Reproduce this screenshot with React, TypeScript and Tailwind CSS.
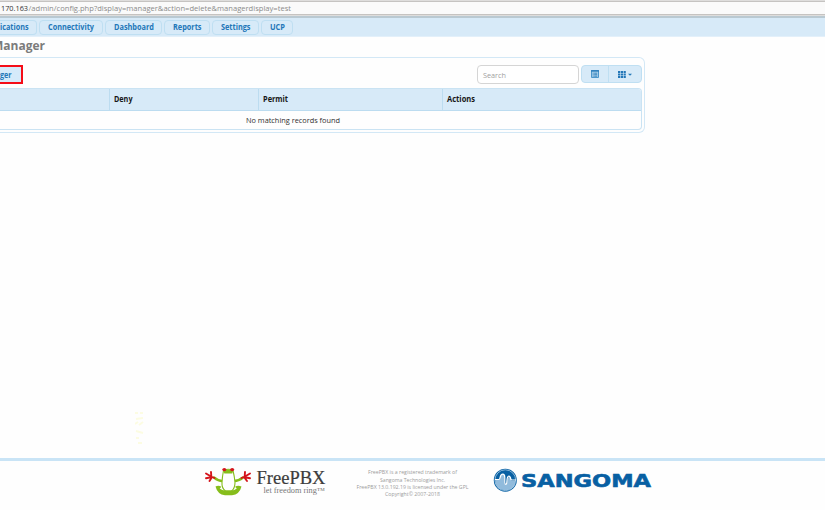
import React from "react";

const tabs = [
  { label: "Connectivity", box: "w-[64px]", width: 46 },
  { label: "Dashboard", box: "w-[57px]", width: 40 },
  { label: "Reports", box: "w-[46px]", width: 28.5 },
  { label: "Settings", box: "w-[47px]", width: 29.5 },
  { label: "UCP", box: "w-[32px]", width: 15 },
];

function Label({ text, width, size = 7.9, weight = 700, fill = "#2377b8", y = 9 }: {
  text: string; width: number; size?: number; weight?: number; fill?: string; y?: number;
}) {
  return (
    <svg width={width} height="12" className="block shrink-0 overflow-visible">
      <text x="0" y={y} textLength={width} lengthAdjust="spacingAndGlyphs" fontSize={size} fontWeight={weight} fill={fill}>{text}</text>
    </svg>
  );
}

function AddressBar() {
  return (
    <div className="h-[18px] shrink-0 border-b-2 border-[#b9c9d2] bg-[#dedddc] pt-px">
      <div className="flex h-[14px] items-center border-y border-[#c5c3c1] bg-[#fafafa] pl-px">
        <svg width="300" height="12" className="block overflow-visible">
          <text x="0" y="9" textLength="27" lengthAdjust="spacingAndGlyphs" fontSize="8" fill="#333333">170.163</text>
          <text x="27.5" y="9" textLength="262.5" lengthAdjust="spacingAndGlyphs" fontSize="8" fill="#8b8b8b">/admin/config.php?display=manager&amp;action=delete&amp;managerdisplay=test</text>
        </svg>
      </div>
    </div>
  );
}

function Nav() {
  return (
    <nav className="flex h-[19px] shrink-0 items-center gap-[2px] border-b border-[#e3f0fa] bg-[#d7eaf8]">
      <div className="flex h-[15px] w-[37px] items-center rounded-r-sm border border-l-0 border-[#bfdff2]">
        <Label text="ications" width={28.5} />
      </div>
      {tabs.map((tab) => (
        <div key={tab.label} className={`${tab.box} flex h-[15px] shrink-0 items-center justify-center rounded-sm border border-[#bfdff2]`}>
          <Label text={tab.label} width={tab.width} />
        </div>
      ))}
    </nav>
  );
}

function Toolbar() {
  return (
    <div className="flex h-[30px] items-start pt-[7px]">
      <button className="flex h-[19px] w-[22.5px] items-center border-2 border-l-0 border-[#f50d18] bg-[#d5eafa]">
        <Label text="ger" width={11.5} />
      </button>
      <div className="ml-auto mr-[2px] flex h-[19px] w-[102px] items-center rounded-sm border border-[#d5d5d5] bg-white pl-[5px]">
        <Label text="Search" width={23} weight={400} size={7.6} fill="#a0a0a0" y={8.5} />
      </div>
      <div className="mr-[2px] flex h-[18px] w-[61px] rounded-sm border border-[#bfdff2] bg-[#d7eaf8]">
        <div className="flex w-[27px] items-center justify-center border-r border-[#bfdff2] pb-px">
          <svg width="8" height="8" viewBox="0 0 8 8" fill="none">
            <path d="M.5 1h7v6.5h-7z" fill="#a7cee9" stroke="#4c97cc" />
            <path d="M0 .8h8" stroke="#2377b8" strokeWidth="1.3" />
            <path d="M1.7 3.2h.9M3.2 3.2h3M1.7 4.7h.9M3.2 4.7h3M1.7 6.2h.9M3.2 6.2h3" stroke="#2377b8" strokeWidth=".8" />
          </svg>
        </div>
        <div className="flex flex-1 items-center justify-center gap-[2px]">
          <svg width="8" height="7" viewBox="0 0 8 7" fill="#2377b8">
            <path d="M0 0h2.2v1.9H0zM2.8 0H5v1.9H2.8zM5.6 0h2.2v1.9H5.6zM0 2.5h2.2v1.9H0zM2.8 2.5H5v1.9H2.8zM5.6 2.5h2.2v1.9H5.6zM0 5h2.2v1.9H0zM2.8 5H5v1.9H2.8zM5.6 5h2.2v1.9H5.6z" />
          </svg>
          <svg width="4" height="3" viewBox="0 0 4 3"><path d="M0 .7h4L2 2.8z" fill="#2377b8" /></svg>
        </div>
      </div>
    </div>
  );
}

function ManagerPanel() {
  return (
    <section className="h-[76px] w-[645px] rounded-r-[6px] border border-l-0 border-[#d3e8f6]">
      <Toolbar />
      <div className="h-[42px] w-[642px] overflow-hidden rounded-r-sm border border-l-0 border-[#cae3f3]">
        <div className="grid h-[22px] grid-cols-[110px_149px_184px_198px] border-b border-[#bcdcf0] bg-[#d7eaf8]">
          <div className="border-r border-[#bcdcf0]" />
          <div className="flex items-center border-r border-[#bcdcf0] pb-px pl-[4px]"><Label text="Deny" width={18.5} fill="#171717" /></div>
          <div className="flex items-center border-r border-[#bcdcf0] pb-px pl-[4px]"><Label text="Permit" width={25} fill="#171717" /></div>
          <div className="flex items-center pb-px pl-[4px]"><Label text="Actions" width={28} fill="#171717" /></div>
        </div>
        <div className="flex h-[18px] items-center pl-[246px]"><Label text="No matching records found" width={94} weight={400} fill="#303030" /></div>
      </div>
    </section>
  );
}

function FreePbxLogo() {
  return (
    <svg width="123" height="30" viewBox="0 0 123 30" className="block shrink-0 overflow-visible">
      <path d="M9 9.5q5 4 9 3.5M38 9.5q-5 4-10 3.5" fill="none" stroke="#86bd1b" strokeWidth="2.4" strokeLinecap="round" />
      <path d="M18.5 2.5q5-2.5 9.5 0 1.5 6 2 12 0 6-3.5 8.5h-6q-4-3-3.5-8.5.3-6 1.5-12z" fill="#fff" stroke="#86bd1b" strokeWidth="1.1" />
      <path d="M18.5 3q4.5-3 9.5 0l-.7 2.4h-8z" fill="#86bd1b" />
      <path d="M10.5 18.5q3-1.4 6 .2l-1.8 1.8q2.5 2 5.3 2h6.5q3 0 5.3-2L30 18.7q3-1.6 6.5-.2-2 8-9.5 8.7h-7q-7.5-.7-9.5-8.7z" fill="#86bd1b" />
      <g fill="#d4141b"><ellipse cx="19.3" cy="1.6" rx="2" ry="1.7" /><ellipse cx="27.2" cy="1.6" rx="2" ry="1.7" /></g>
      <g fill="none" stroke="#d4141b" strokeWidth="1.9" strokeLinecap="round" strokeLinejoin="round">
        <path d="M9.5 10L6 8.5 1 5.5M6.3 8.5L6 4M7 9L1 10.2M7 9L4.5 13" />
        <path d="M36.5 10l3.5-1.5 5-3M39.7 8.5L40 4M39 9l6 1.2M39 9l3 4" />
      </g>
      <g fontFamily="'Liberation Serif', 'DejaVu Serif', serif">
        <text x="51.5" y="15.5" fontSize="18" textLength="69" lengthAdjust="spacingAndGlyphs" fill="#3c3c3c" stroke="#3c3c3c" strokeWidth=".2">FreePBX</text>
        <text x="58.5" y="25.3" fontSize="7.5" textLength="61.5" lengthAdjust="spacingAndGlyphs" fill="#777">let freedom ring™</text>
      </g>
    </svg>
  );
}

function Copyright() {
  const lines: [string, number][] = [
    ["FreePBX is a registered trademark of", 89],
    ["Sangoma Technologies Inc.", 65],
    ["FreePBX 13.0.192.19 is licensed under the GPL", 112],
    ["Copyright© 2007-2018", 55],
  ];
  return (
    <svg width="114" height="32" viewBox="0 0 114 32" className="block shrink-0">
      {lines.map(([text, width], i) => (
        <text key={text} x="56.5" y={6.3 + i * 7.35} textAnchor="middle" textLength={width} lengthAdjust="spacingAndGlyphs" fontSize="5.7" fill="#9c9c9c">{text}</text>
      ))}
    </svg>
  );
}

function SangomaLogo() {
  return (
    <svg width="160" height="26" viewBox="0 0 160 26" className="block shrink-0">
      <circle cx="12.3" cy="12.2" r="11.5" fill="#0860a3" />
      <path d="M2.2 11.8H6q.8 0 1-1.8.8-3.5 2.8-3.5 1.5 0 1.7 3v5.8q1 1.8 2.5.2 0-4 1.2-6 1.7-2 2.5 1l.8 2.5h3.8q0 9.2-10 9.3-10-.1-10.1-10.5z" fill="#91bbdc" />
      <circle cx="12.3" cy="12.2" r="10.4" fill="none" stroke="#a9cbe4" strokeWidth=".8" />
      <path d="M2 11.5h3.8q1 0 1.2-1.7Q7.8 6.2 9.8 6.2t2 3.4v5q0 1.7 1 1.7t1-1.7q.2-6.5 2-6.5 1.6 0 2 3 .2.9 1.2.9H23" fill="none" stroke="#fff" strokeWidth="1.2" />
      <text x="28" y="18.5" fontFamily="'DejaVu Sans', sans-serif" fontWeight="700" fontSize="18" textLength="130" lengthAdjust="spacingAndGlyphs" fill="#0860a3" stroke="#0860a3" strokeWidth=".6">SANGOMA</text>
    </svg>
  );
}

export default function App() {
  return (
    <main className="flex h-[510px] w-[825px] flex-col overflow-hidden bg-[#fefefe] font-['Open_Sans','Noto_Sans',sans-serif]">
      <AddressBar />
      <Nav />
      <header className="flex h-[20px] w-[45px] shrink-0 justify-end">
        <svg width="54" height="18" className="block shrink-0 overflow-visible">
          <text x="1" y="13" fontSize="12.3" fontWeight="700" textLength="53" lengthAdjust="spacingAndGlyphs" fill="#7b7b7b">Manager</text>
        </svg>
      </header>
      <ManagerPanel />
      <div className="flex flex-1 items-end pb-[13px] pl-[135px]">
        <svg width="9" height="34" viewBox="0 0 9 34" fill="none" stroke="#fcfce2" strokeWidth="2">
          <path d="M0 2h3M5 2h3M1 8l7-1M0 13l3-2M4 14l4-3M1 20l7 2M1 27h3M3 32h4" />
        </svg>
      </div>
      <footer className="flex h-[52px] shrink-0 items-start border-t-[3px] border-[#c9e4f6] pl-[205px] pt-[7px]">
        <FreePbxLogo />
        <div className="ml-[28px]"><Copyright /></div>
        <div className="ml-[23px]"><SangomaLogo /></div>
      </footer>
    </main>
  );
}
